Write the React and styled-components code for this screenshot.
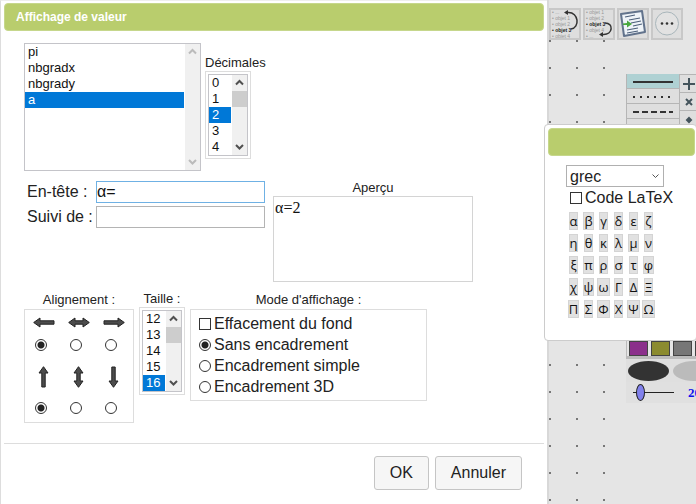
import React, { useRef, useState } from "react";
import styled, { createGlobalStyle } from "styled-components";

const GlobalStyle = createGlobalStyle`
  * {
    box-sizing: border-box;
  }

  body {
    margin: 0;
    font-family: "Liberation Sans", Arial, sans-serif;
    font-size: 16px;
    color: #222;
    background-color: #fff;
  }

  input, select, button {
    font-family: inherit;
    color: inherit;
  }
`;

const Page = styled.div`
  position: relative;
  display: flex;
  min-height: 100vh;
  overflow: hidden;
`;

const Dialog = styled.main`
  flex: 1;
  min-width: 0;
  border-left: 1px solid #ddd;
  border-top: 1px solid #eee;
  padding: 2px 3px;
`;

const TitleBar = styled.h1`
  height: 28px;
  line-height: 26px;
  margin: 0;
  padding: 0 11px;
  border: 1px solid #c6d78c;
  border-radius: 4px;
  background-color: #b9cd6d;
  color: #fff;
  font-size: 12px;
`;

const Content = styled.div`
  display: flex;
  flex-direction: column;
  gap: 9px;
  padding: 12px 20px 20px;
`;

const Row = styled.div`
  display: flex;
  align-items: ${(props) => props.align || "flex-start"};
  gap: ${(props) => props.gap || "5px"};
`;

const Column = styled.div`
  display: flex;
  flex-direction: column;
`;

const Caption = styled.label`
  font-size: 13px;
  line-height: 16px;
  text-align: center;
`;

const Group = styled.fieldset`
  margin: 0;
  padding: 0;
  border: none;
  min-width: 0;
`;

const Legend = styled.legend`
  width: 100%;
  padding: 0;
  font-size: 13px;
  line-height: 18px;
  text-align: center;
`;

const Panel = styled.div`
  width: ${(props) => props.width};
  padding: ${(props) => props.pad || "2px"};
  border: 1px solid #ddd;
`;

const ListFrame = styled.div`
  display: flex;
  width: ${(props) => props.width || "100%"};
  height: ${(props) => props.height};
  border: 1px solid #c4c4c9;
  background-color: #fff;
`;

const ListSelect = styled.select`
  flex: 1;
  min-width: 0;
  height: 100%;
  padding: 0;
  border: none;
  border-radius: 0;
  outline: none;
  background-color: #fff;
  color: #111;
  font-size: 13px;
  overflow-y: auto;
  scrollbar-width: none;

  option {
    height: 16px;
    min-height: 16px;
    line-height: 16px;
    padding: 0 3px;
  }

  option:checked {
    background: linear-gradient(#0078d7, #0078d7);
    -webkit-text-fill-color: #fff;
  }
`;

const ScrollTrack = styled.div`
  flex: none;
  display: flex;
  flex-direction: column;
  width: 15px;
  margin-left: 1px;
  background-color: #f0f0f0;
`;

const ScrollButton = styled.button`
  display: block;
  width: 15px;
  height: 16px;
  margin-top: ${(props) => (props.last ? "auto" : "0")};
  padding: 0;
  border: none;
  background: none;
  color: ${(props) => (props.disabled ? "#bbb" : "#505050")};
`;

const ScrollThumb = styled.div`
  height: 16px;
  background-color: #cdcdcd;
`;

const Form = styled.div`
  display: grid;
  grid-template-columns: 69px 169px;
  grid-auto-rows: 22px;
  row-gap: 3px;
  padding: 1px 0 0 3px;
`;

const FieldLabel = styled.label`
  line-height: 22px;
  white-space: nowrap;
`;

const TextInput = styled.input`
  width: 100%;
  height: 22px;
  padding: 0;
  border: 1px solid ${(props) => (props.active ? "#6fb1e4" : "#b4b4b4")};
  border-radius: 0;
  outline: none;
  font-size: 16px;
  color: #111;
`;

const Preview = styled.output`
  display: block;
  width: 200px;
  height: 86px;
  padding: 1px;
  border: 1px solid #d4d4d4;
  font-family: "Liberation Serif", "Times New Roman", serif;
  font-size: 16px;
  line-height: 20px;
  color: #111;
`;

const Directions = styled.div`
  display: grid;
  grid-template-columns: repeat(3, 35px);
  row-gap: 15px;
`;

const Direction = styled.label`
  display: flex;
  flex-direction: column;
  align-items: flex-start;
  gap: ${(props) => props.gap};

  input {
    margin-left: 2px;
  }
`;

const Radio = styled.input.attrs({ type: "radio" })`
  appearance: none;
  flex: none;
  width: 12px;
  height: 12px;
  margin: 0;
  border: 1px solid #333;
  border-radius: 50%;
  background-color: #fff;

  &:checked {
    background-image: radial-gradient(circle, #222 3px, transparent 4px);
  }
`;

const Checkbox = styled.input.attrs({ type: "checkbox" })`
  appearance: none;
  flex: none;
  width: 12px;
  height: 12px;
  margin: 0;
  border: 1px solid #333;
  background-color: #fff;

  &:checked {
    box-shadow: inset 0 0 0 2px #fff;
    background-color: #222;
  }
`;

const Choice = styled.label`
  display: flex;
  align-items: center;
  gap: 3px;
  line-height: 21px;
  white-space: nowrap;
`;

const Footer = styled.footer`
  display: flex;
  justify-content: flex-end;
  gap: 6px;
  padding: 12px 22px;
  border-top: 1px solid #ddd;
`;

const Button = styled.button`
  height: 34px;
  padding: 0 15px;
  border: 1px solid #c5c5c5;
  border-radius: 3px;
  background-color: #f6f6f6;
  font-size: 16px;
`;

const Workspace = styled.aside`
  flex: none;
  display: flex;
  flex-direction: column;
  width: 149px;
  border-left: 2px solid #d8d8d8;
  background-color: #e5e5e5;
`;

const Toolbar = styled.div`
  display: flex;
  gap: 2px;
  padding-top: 8px;
`;

const ToolButton = styled.button`
  display: block;
  width: 32px;
  height: 32px;
  padding: 0;
  border: 2px solid #c8c8c8;
  background-color: #dedede;

  svg {
    display: block;
  }
`;

const WorkArea = styled.div`
  flex: 1;
  display: flex;
`;

const DotGrid = styled.div`
  flex: none;
  width: 60px;
  background-image: radial-gradient(circle at 1px 1px, #777 1px, transparent 1px);
  background-size: 27px 27px;
`;

const Palette = styled.div`
  flex: 1;
  display: flex;
  flex-direction: column;
  min-width: 0;
  padding: 34px 0 0 17px;
`;

const PaletteTop = styled.div`
  display: flex;
  height: 267px;
`;

const LineStyles = styled.div`
  width: 54px;
`;

const LineButton = styled.button`
  display: block;
  width: 54px;
  height: 15px;
  padding: 0;
  border: 1px solid #b5b5b5;
  border-width: 0 1px 1px;
  background-color: ${(props) => (props.active ? "#afd1d3" : "#dedede")};
`;

const MarkButton = styled.button`
  display: block;
  width: 18px;
  height: 18px;
  padding: 0;
  border: 1px solid #b5b5b5;
  border-width: 1px 0 0;
  background-color: #dedede;
`;

const Swatches = styled.div`
  display: flex;
  gap: 3px;
  height: 18px;
  padding-left: 2px;
  border: 1px solid #bbb;
  border-width: 0 0 3px 1px;
  overflow: hidden;
`;

const Swatch = styled.button`
  flex: none;
  width: 19px;
  height: 15px;
  padding: 0;
  border: 1px solid #444;
  background-color: ${(props) => props.color};
`;

const Tones = styled.div`
  display: flex;
  gap: 4px;
  height: 23px;
  padding: 2px;
  background-color: #dfdfdf;
  overflow: hidden;
`;

const Tone = styled.button`
  flex: none;
  width: 41px;
  height: 20px;
  padding: 0;
  border: none;
  border-radius: 50%;
  background-color: ${(props) => props.color};
`;

const SliderRow = styled.div`
  display: flex;
  align-items: center;
  gap: 14px;
  height: 21px;
  padding-left: 7px;
  background-color: #e0e0e0;
  overflow: hidden;
`;

const Slider = styled.input.attrs({ type: "range" })`
  appearance: none;
  flex: none;
  width: 41px;
  height: 18px;
  margin: 0;
  background: linear-gradient(#222, #222) center / 100% 1px no-repeat;

  &::-webkit-slider-thumb {
    appearance: none;
    width: 9px;
    height: 17px;
    border: 1px solid #222;
    border-radius: 50%;
    background-color: #8181ec;
  }
`;

const SliderValue = styled.span`
  font-family: "Liberation Serif", "Times New Roman", serif;
  font-size: 13px;
  font-weight: bold;
  color: #1010ee;
`;

const Popup = styled.section`
  position: absolute;
  top: 124px;
  right: -1px;
  width: 153px;
  padding: 3px 0 22px 3px;
  border: 1px solid #ccc;
  border-radius: 4px;
  background-color: #fff;
`;

const PopupBar = styled.div`
  height: 28px;
  margin-right: 1px;
  border: 1px solid #c6d78c;
  border-radius: 4px;
  background-color: #b9cd6d;
`;

const PopupBody = styled.div`
  display: flex;
  flex-direction: column;
  align-items: flex-start;
  padding: 9px 0 0 18px;

  label {
    padding-left: 4px;
  }
`;

const DropDown = styled.select`
  appearance: none;
  width: 98px;
  height: 22px;
  padding: 0 3px;
  border: 1px solid #b0b0b0;
  border-radius: 0;
  background: #fff
    url("data:image/svg+xml,%3Csvg xmlns='http://www.w3.org/2000/svg' width='7' height='5'%3E%3Cpath d='M.5 .5 3.500 3.500 6.500 .5' fill='none' stroke='%23555'/%3E%3C/svg%3E")
    right 4px center no-repeat;
  font-size: 16px;
`;

const Keys = styled.div`
  display: grid;
  grid-template-columns: repeat(6, 15px);
  justify-items: center;
  row-gap: 4px;
  padding-top: 4px;
`;

const Key = styled.button`
  height: 18px;
  padding: 0;
  border: 1px solid #d4d4d4;
  background-color: #e1e1e1;
  font-family: "Open Sans", "Noto Sans", sans-serif;
  font-size: 13px;
  line-height: 14px;
  color: #111;
`;

const arrowShapes = {
  start: "M.7 5.500 7 1V3.800H21V7.200H7V10Z",
  both: "M.7 5.500 7 1V3.800H15V1L21.300 5.500 15 10V7.200H7V10Z",
  end: "M21.300 5.500 15 1V3.800H1V7.200H15V10Z",
};

const Arrow = ({ kind, vertical }) => (
  <svg width="22" height={vertical ? 22 : 11}>
    <path
      d={arrowShapes[kind]}
      transform={vertical ? "matrix(0 1 1 0 5 0)" : undefined}
      fill="#4c4c4c"
      stroke="#222"
    />
  </svg>
);

const ListIcon = ({ items, bold, arrow, head }) => (
  <svg width="28" height="28" fontFamily="Liberation Sans" fontSize="5">
    {items.map((item, i) => (
      <text
        key={i}
        x="1"
        y={4 + i * 6}
        fill={i === bold ? "#222" : "#999"}
        fontWeight={i === bold ? "bold" : "normal"}
      >
        • {item}
      </text>
    ))}
    <path d={arrow} fill="none" stroke="#333" strokeWidth="1.500" />
    <path d={head} fill="#333" />
  </svg>
);

const PageIcon = () => (
  <svg width="28" height="28">
    <path d="M2 4 23 1 26 22 5 26Z" fill="#eef3f8" stroke="#62738c" strokeWidth="2" strokeLinejoin="round" />
    <path
      d="M6 7 16 5M10 10 21 8M12 13 22 11M14 16 23 14M8 20 19 18M8 23 19 21"
      stroke="#4c5f7a"
      strokeWidth="1.200"
    />
    <path d="M4 13.500 8 13V10.500L13 14 8 17.500V15H4Z" fill="#48a83d" />
  </svg>
);

const MoreIcon = () => (
  <svg width="28" height="28">
    <circle cx="14" cy="13.500" r="11.500" fill="#e2e2e2" stroke="#a9b6bb" />
    <circle cx="9" cy="13.500" r="1.300" fill="#333" />
    <circle cx="14" cy="13.500" r="1.300" fill="#333" />
    <circle cx="19" cy="13.500" r="1.300" fill="#333" />
  </svg>
);

const greek = [..."αβγδεζηθκλμνξπρστφχψωΓΔΞΠΣΦΧΨΩ"];
const variables = ["pi", "nbgradx", "nbgrady", "a"];
const modes = ["Sans encadrement", "Encadrement simple", "Encadrement 3D"];
const lines = [
  { name: "Trait continu" },
  { name: "Trait pointillé", dash: "2 5" },
  { name: "Trait en tirets", dash: "6 3" },
  { name: "Trait mixte", dash: "8 2 2 2" },
];
const marks = [
  { name: "Plus", d: "M9 3V15M3 9H15" },
  { name: "Croix", d: "M6 6 12 12M12 6 6 12" },
  { name: "Losange", d: "M9 7 11 9 9 11 7 9Z" },
];
const range = (from, count) => Array.from({ length: count }, (_, i) => from + i);

const ListBox = ({ items, width, height, idle, ...rest }) => {
  const list = useRef(null);
  const scroll = (step) => list.current.scrollBy(0, step);

  return (
    <ListFrame width={width} height={height}>
      <ListSelect ref={list} {...rest}>
        {items.map((item) => (
          <option key={item}>{item}</option>
        ))}
      </ListSelect>
      <ScrollTrack>
        <ScrollButton disabled={idle} tabIndex={-1} aria-label="Défiler vers le haut" onClick={() => scroll(-16)}>
          <svg width="15" height="16" display="block">
            <path d="M4 9.500 7.500 6 11 9.500" fill="none" stroke="currentColor" strokeWidth="2" />
          </svg>
        </ScrollButton>
        {idle ? null : <ScrollThumb />}
        <ScrollButton disabled={idle} tabIndex={-1} last="true" aria-label="Défiler vers le bas" onClick={() => scroll(16)}>
          <svg width="15" height="16" display="block">
            <path d="M4 6 7.500 9.500 11 6" fill="none" stroke="currentColor" strokeWidth="2" />
          </svg>
        </ScrollButton>
      </ScrollTrack>
    </ListFrame>
  );
};

const AlignChoice = ({ name, labels, vertical }) =>
  ["start", "both", "end"].map((kind, i) => (
    <Direction key={kind} gap={vertical ? "14px" : "11px"}>
      <Arrow kind={kind} vertical={vertical} />
      <Radio name={name} aria-label={labels[i]} defaultChecked={i === 0} />
    </Direction>
  ));

const ValueDialog = () => {
  const [prefix, setPrefix] = useState("α=");
  const [suffix, setSuffix] = useState("");

  return (
    <Dialog>
      <TitleBar>Affichage de valeur</TitleBar>
      <Content>
        <Row align="center" gap="4px">
          <ListBox items={variables} size="8" width="177px" height="128px" idle aria-label="Valeur" defaultValue="a" />
          <Column>
            <Caption htmlFor="decimals">Décimales</Caption>
            <Panel width="46px">
              <ListBox items={range(0, 16)} id="decimals" size="5" height="82px" defaultValue="2" />
            </Panel>
          </Column>
        </Row>
        <Row gap="8px">
          <Form>
            <FieldLabel htmlFor="prefix">En-tête :</FieldLabel>
            <TextInput id="prefix" active="true" value={prefix} onChange={(e) => setPrefix(e.target.value)} />
            <FieldLabel htmlFor="suffix">Suivi de :</FieldLabel>
            <TextInput id="suffix" value={suffix} onChange={(e) => setSuffix(e.target.value)} />
          </Form>
          <Column>
            <Caption htmlFor="preview">Aperçu</Caption>
            <Preview id="preview">
              {prefix}2{suffix}
            </Preview>
          </Column>
        </Row>
        <Row>
          <Group>
            <Legend>Alignement :</Legend>
            <Panel width="110px" pad="7px 0 8px 8px">
              <Directions>
                <AlignChoice name="horizontal" labels={["Gauche", "Centre", "Droite"]} />
                <AlignChoice name="vertical" labels={["Haut", "Milieu", "Bas"]} vertical />
              </Directions>
            </Panel>
          </Group>
          <Column>
            <Caption htmlFor="size">Taille :</Caption>
            <Panel width="46px">
              <ListBox items={range(12, 16)} id="size" size="5" height="82px" defaultValue="16" />
            </Panel>
          </Column>
          <Group>
            <Legend>Mode d'affichage :</Legend>
            <Panel width="237px" pad="3px 8px">
              <Choice>
                <Checkbox />
                Effacement du fond
              </Choice>
              {modes.map((mode, i) => (
                <Choice key={mode}>
                  <Radio name="mode" defaultChecked={i === 0} />
                  {mode}
                </Choice>
              ))}
            </Panel>
          </Group>
        </Row>
      </Content>
      <Footer>
        <Button>OK</Button>
        <Button>Annuler</Button>
      </Footer>
    </Dialog>
  );
};

const Board = () => (
  <Workspace>
    <Toolbar>
      <ToolButton aria-label="Monter l'objet">
        <ListIcon
          items={["...", "objet 1", "objet 2", "objet 3", "objet 4"]}
          bold={3}
          arrow="M20 19C29 18 28 2 17 2.500"
          head="M13 2.500 17 0V5Z"
        />
      </ToolButton>
      <ToolButton aria-label="Descendre l'objet">
        <ListIcon
          items={["objet 1", "objet 2", "objet 3", "objet 4", "..."]}
          bold={2}
          arrow="M20 13C29 13 28 25 18 24.500"
          head="M14 24.500 18 22V27Z"
        />
      </ToolButton>
      <ToolButton aria-label="Protocole">
        <PageIcon />
      </ToolButton>
      <ToolButton aria-label="Plus d'outils">
        <MoreIcon />
      </ToolButton>
    </Toolbar>
    <WorkArea>
      <DotGrid />
      <Palette>
        <PaletteTop>
          <LineStyles>
            {lines.map((line, i) => (
              <LineButton key={line.name} aria-label={line.name} active={i === 0 ? "true" : undefined}>
                <svg width="52" height="14" display="block">
                  <path d="M6 8H46" stroke="#333" strokeWidth="2" strokeDasharray={line.dash} />
                </svg>
              </LineButton>
            ))}
          </LineStyles>
          <div>
            {marks.map((mark) => (
              <MarkButton key={mark.name} aria-label={mark.name}>
                <svg width="18" height="17" display="block">
                  <path d={mark.d} stroke="#44545c" strokeWidth="2" fill="#44545c" />
                </svg>
              </MarkButton>
            ))}
          </div>
        </PaletteTop>
        <Swatches>
          {["#8b2f8b", "#8b8b2f", "#777", "#333"].map((color) => (
            <Swatch key={color} color={color} aria-label={color} />
          ))}
        </Swatches>
        <Tones>
          <Tone color="#333" aria-label="Foncé" />
          <Tone color="#bbb" aria-label="Clair" />
        </Tones>
        <SliderRow>
          <Slider aria-label="Opacité" defaultValue="10" />
          <SliderValue>20</SliderValue>
        </SliderRow>
      </Palette>
    </WorkArea>
  </Workspace>
);

const SymbolPopup = () => (
  <Popup>
    <PopupBar />
    <PopupBody>
      <DropDown aria-label="Alphabet">
        <option>grec</option>
      </DropDown>
      <Choice>
        <Checkbox />
        Code LaTeX
      </Choice>
      <Keys>
        {greek.map((letter) => (
          <Key key={letter}>{letter}</Key>
        ))}
      </Keys>
    </PopupBody>
  </Popup>
);

const App = () => (
  <>
    <GlobalStyle />
    <Page>
      <ValueDialog />
      <Board />
      <SymbolPopup />
    </Page>
  </>
);

export default App;
